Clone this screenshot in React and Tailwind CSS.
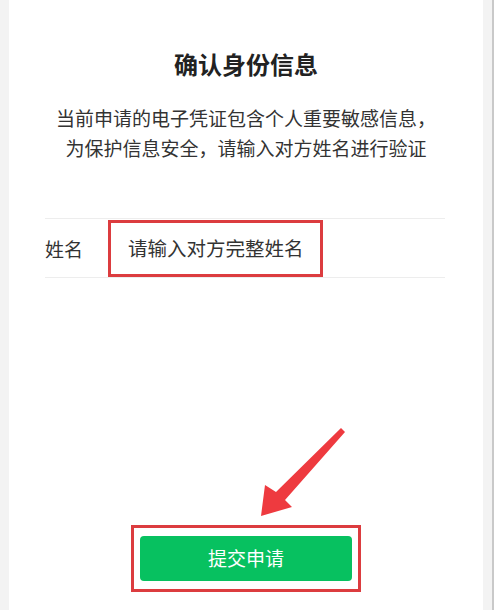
const font = { fontFamily: '"Noto Sans CJK SC", "Noto Sans", sans-serif' }

const Arrow = () => (
  <svg className="absolute left-0 top-0 pointer-events-none" width="494" height="610" viewBox="0 0 494 610">
    <polygon
      points="341,428 345,432 285,500 292,507 261,516 265,485 276,492"
      fill="#ee3a3f"
    />
  </svg>
)

export default function App() {
  return (
    <div className="relative flex h-[610px] w-[494px] bg-white text-[#333]" style={font}>
      <div className="w-[9px] shrink-0 bg-[#f3f3f3]" />

      <div className="flex flex-1 flex-col items-center pt-[48px]">
        <h1 className="text-[24px] font-bold leading-[32px] text-[#222]">确认身份信息</h1>

        <p className="mt-[23px] text-center text-[19px] leading-[30px] text-[#333]">
          当前申请的电子凭证包含个人重要敏感信息，
          <br />
          为保护信息安全，请输入对方姓名进行验证
        </p>

        <div className="mt-[55px] flex h-[60px] w-full items-center pl-[36px] pr-[38px]">
          <div className="flex h-full w-full items-center border-y border-[#ededed]">
            <span className="w-[63px] text-[19px] leading-none">姓名</span>
            <div className="flex h-[57px] w-[215px] items-center border-[3px] border-[#dc3c3f] pl-[17px]">
              <span className="text-[19.5px] leading-none text-[#333]">请输入对方完整姓名</span>
            </div>
          </div>
        </div>

        <div className="mt-[247px] border-[3px] border-[#dc3c3f] px-[6px] py-[8px]">
          <button className="flex h-[45px] w-[212px] items-center justify-center rounded-[4px] bg-[#07c160] text-[19px] text-white">
            提交申请
          </button>
        </div>
      </div>

      <div className="flex w-[11px] shrink-0">
        <div className="flex-1 bg-[#f3f3f3]" />
        <div className="w-[2px] bg-[#c9c9c9]" />
      </div>

      <Arrow />
    </div>
  )
}
